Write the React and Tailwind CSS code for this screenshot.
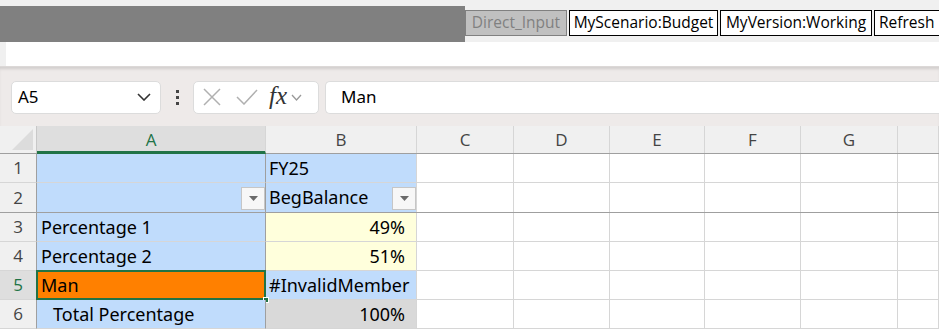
const cols = [
  { id: "A", w: "w-[229px]" },
  { id: "B", w: "w-[151px]" },
  { id: "C", w: "w-[97px]" },
  { id: "D", w: "w-[96px]" },
  { id: "E", w: "w-[95px]" },
  { id: "F", w: "w-[96px]" },
  { id: "G", w: "w-[97px]" },
  { id: "H", w: "flex-1" },
];

const rows = [
  { n: 1, a: "", b: "FY25", bBg: "bg-[#c0dcfc]" },
  { n: 2, a: "", b: "BegBalance", bBg: "bg-[#c0dcfc]", filter: true },
  { n: 3, a: "Percentage 1", b: "49%", bBg: "bg-[#ffffdc]", right: true },
  { n: 4, a: "Percentage 2", b: "51%", bBg: "bg-[#ffffdc]", right: true },
  { n: 5, a: "Man", b: "#InvalidMember", bBg: "bg-[#c0dcfc]", sel: true },
  { n: 6, a: "Total Percentage", b: "100%", bBg: "bg-[#d9d9d9]", right: true, indent: true },
];

function FilterBtn() {
  return (
    <div className="w-[24px] h-[23px] mt-[1px] bg-[#f7f7f7] border border-[#c6c6c6] flex items-center justify-center shrink-0">
      <svg width="9" height="5" viewBox="0 0 9 5">
        <path d="M0 0H9L4.5 5Z" fill="#6a6a6a" />
      </svg>
    </div>
  );
}

function Sheet() {
  const cell = "h-[29px] border-b border-[#d6d6d6]";
  return (
    <div className="font-['Noto_Sans',sans-serif] text-[18px] text-black">
      {/* column headers */}
      <div className="flex h-[28px] bg-[#f0f0f0] border-b border-[#9f9f9f]">
        <div className="w-[37px] shrink-0 border-r border-[#c8c8c8] relative">
          <svg className="absolute right-[3px] bottom-[3px]" width="21" height="21" viewBox="0 0 21 21">
            <path d="M21 0V21H0Z" fill="#dcdcdc" />
          </svg>
        </div>
        {cols.map((c) => (
          <div
            key={c.id}
            className={`${c.w} shrink-0 flex items-center justify-center border-r border-[#d6d6d6] font-['Open_Sans',sans-serif] text-[17px] ${
              c.id === "A"
                ? "bg-[#dedede] text-[#217346] border-b-[3px] border-b-[#217346] -mb-px pt-[2px]"
                : "text-[#444]"
            }`}
          >
            {c.id !== "H" && c.id}
          </div>
        ))}
      </div>
      {rows.map((r) => (
        <div
          key={r.n}
          className={`flex ${r.n === 2 ? "border-b border-[#9f9f9f]" : ""}`}
        >
          <div
            className={`${cell} w-[37px] shrink-0 flex items-center justify-center border-r border-r-[#9f9f9f] font-['Open_Sans',sans-serif] text-[17px] ${
              r.sel ? "bg-[#dedede] text-[#217346]" : "bg-[#f0f0f0] text-[#444]"
            } ${r.n === 2 ? "border-b-0" : ""}`}
          >
            {r.n}
          </div>
          <div
            className={`${cell} w-[229px] shrink-0 border-r border-r-[#9f9f9f] flex items-center relative ${
              r.sel ? "bg-[#ff8000]" : "bg-[#c0dcfc]"
            } ${r.n === 2 ? "border-b-0 justify-end" : ""} ${r.indent ? "pl-[16px]" : "pl-[4px]"}`}
          >
            {r.a}
            {r.filter && <FilterBtn />}
            {r.sel && (
              <>
                <div className="absolute -left-px -top-px -right-px -bottom-px border-2 border-[#217346]" />
                <div className="absolute -right-[4px] -bottom-[4px] w-[6px] h-[6px] bg-[#217346] border border-white" />
              </>
            )}
          </div>
          <div
            className={`${cell} w-[151px] shrink-0 border-r border-[#d6d6d6] flex items-center ${r.bBg} ${
              r.right ? "justify-end pr-[11px]" : "pl-[3px]"
            } ${r.filter ? "justify-between" : ""} ${r.n === 2 ? "border-b-0" : ""}`}
          >
            {r.b}
            {r.filter && <FilterBtn />}
          </div>
          {cols.slice(2).map((c) => (
            <div
              key={c.id}
              className={`${cell} ${c.w} shrink-0 bg-white border-r border-[#d6d6d6] ${r.n === 2 ? "border-b-0" : ""}`}
            />
          ))}
        </div>
      ))}
    </div>
  );
}

export default function App() {
  return (
    <div className="w-[939px] h-[333px] overflow-hidden bg-white">
      {/* add-in ribbon strip */}
      <div className="bg-[#f0f0f0] h-[42px] flex items-start">
        <div className="w-[465px] h-[36px] mt-[6px] bg-[#808080] shrink-0" />
        <div className="flex gap-[2px] mt-[10px] font-['Open_Sans',sans-serif] text-[15.5px]">
          <div className="h-[26px] w-[102px] flex items-center justify-center bg-[#c0c0c0] border border-[#808080] text-[#808080]">
            Direct_Input
          </div>
          <div className="h-[26px] w-[149px] flex items-center justify-center bg-white border border-black">
            MyScenario:Budget
          </div>
          <div className="h-[26px] w-[152px] flex items-center justify-center bg-white border border-black">
            MyVersion:Working
          </div>
          <div className="h-[26px] w-[80px] flex items-center pl-[4px] bg-white border border-black">
            Refresh
          </div>
        </div>
      </div>
      <div className="bg-[#f0f0f0] pl-[6px]">
        <div className="h-[24px] bg-white" />
      </div>
      {/* formula bar */}
      <div className="h-[60px] bg-[#eeeae9] border-t border-[#dcd8d7] shadow-[inset_0_3px_3px_-1px_rgba(0,0,0,0.12)] flex items-center pl-[11px] pt-[1px] gap-[6px] font-['Noto_Sans',sans-serif]">
        <div className="w-[150px] h-[33px] bg-white rounded-[5px] border border-[#dcdcdc] flex items-center justify-between pl-[6px] pr-[9px] text-[17px]">
          A5
          <svg width="14" height="8" viewBox="0 0 14 8">
            <path d="M1 1L7 7L13 1" fill="none" stroke="#333" strokeWidth="1.6" />
          </svg>
        </div>
        <div className="w-[20px] flex flex-col items-center gap-[3px]">
          <div className="w-[3px] h-[3px] bg-[#444]" />
          <div className="w-[3px] h-[3px] bg-[#444]" />
          <div className="w-[3px] h-[3px] bg-[#444]" />
        </div>
        <div className="w-[126px] h-[33px] bg-white rounded-[5px] border border-[#dcdcdc] flex items-center pl-[9px]">
          <svg width="18" height="18" viewBox="0 0 18 18">
            <path d="M1 1L17 17M17 1L1 17" stroke="#b0b0b0" strokeWidth="1.5" />
          </svg>
          <svg className="ml-[15px]" width="22" height="16" viewBox="0 0 22 16">
            <path d="M1 8L8 15L21 1" fill="none" stroke="#b0b0b0" strokeWidth="1.5" />
          </svg>
          <span className="ml-[11px] font-['Liberation_Serif',serif] italic text-[25px] leading-none text-[#333] -mt-[4px]">
            fx
          </span>
          <svg className="ml-[4px]" width="11" height="7" viewBox="0 0 11 7">
            <path d="M1 1L5.5 6L10 1" fill="none" stroke="#999" strokeWidth="1.3" />
          </svg>
        </div>
        <div className="flex-1 h-[33px] bg-white rounded-l-[5px] border border-r-0 border-[#dcdcdc] flex items-center pl-[15px] text-[17px]">
          Man
        </div>
      </div>
      <Sheet />
    </div>
  );
}
